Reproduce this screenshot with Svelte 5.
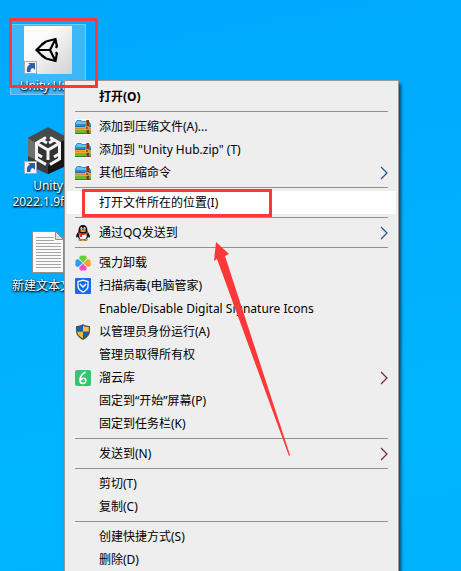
<script>
  const groups = [
    [{ label: "打开(O)", isDefault: true }],
    [
      { label: "添加到压缩文件(A)...", icon: "archive" },
      { label: '添加到 "Unity Hub.zip" (T)', icon: "archive" },
      { label: "其他压缩命令", icon: "archive", submenu: true }
    ],
    [{ label: "打开文件所在的位置(I)", active: true }],
    [{ label: "通过QQ发送到", icon: "penguin", submenu: true }],
    [
      { label: "强力卸载", icon: "clover" },
      { label: "扫描病毒(电脑管家)", icon: "guard" },
      { label: "Enable/Disable Digital Signature Icons" },
      { label: "以管理员身份运行(A)", icon: "shield" },
      { label: "管理员取得所有权" },
      { label: "溜云库", icon: "six", submenu: true, warm: true },
      { label: "固定到“开始”屏幕(P)" },
      { label: "固定到任务栏(K)" }
    ],
    [{ label: "发送到(N)", submenu: true, warm: true }],
    [{ label: "剪切(T)" }, { label: "复制(C)" }],
    [{ label: "创建快捷方式(S)" }, { label: "删除(D)" }]
  ];
</script>

{#snippet shortcutArrow()}
  <rect x="0.5" y="35.5" width="12" height="12" fill="#f6f6f6" stroke="#a9a9a9" />
  <path d="M3 46c-.5-4.500.5-6.500 3-7.500L4 37h7v7l-2-2c-2 .5-2.800 1.800-2.500 4z" fill="#2b5fae" />
{/snippet}

{#snippet menuIcon(name)}
  <svg viewBox="0 0 16 16" width="16" height="16" aria-hidden="true">
    {#if name === "archive"}
      <rect width="16" height="16" fill="#fff" />
      <path d="M0 4l2-3h4l1 1h7l2 3v3H0z" fill="#238ed0" />
      <path d="M2 2h4l1 1h6l1 2H1z" fill="#67c4f2" />
      <path d="M0 7h16v1H0z" fill="#176cae" />
      <path d="M0 8h16v3H0z" fill="#f4a629" />
      <path d="M0 9h16v1H0z" fill="#e98a1c" />
      <path d="M0 11h16v4H0z" fill="#72b928" />
      <path d="M0 14h16v1H0z" fill="#367d1b" />
      <path d="M11 1h3v14h-3z" fill="#713d22" />
      <path d="M11 1h1v14h-1z" fill="#a7653b" />
      <path d="M10.500 7.500h3v3h-3z" fill="#8c5731" stroke="#e5c08c" stroke-width=".7" />
    {:else if name === "penguin"}
      <path d="M3.500 6.500C3.500 2 5 0 8 0s4.500 2 4.500 6.500c2 2.500 3 5 2 6-.5.5-1-.3-1.500-1-.3 1.500-1 2.200-1.500 2.600l1 1c-1 1.100-3.500 1-4.500 0-1 1-3.500 1.100-4.500 0l1-1C4 13.700 3.300 13 3 11.500c-.5.700-1 1.500-1.500 1-1-1 0-3.500 2-6z" fill="#111" />
      <path d="M4.500 9h7c1 5-2 5.500-3.500 5.500S3.500 14 4.500 9z" fill="#fff" />
      <ellipse cx="6.500" cy="3.500" rx="1.100" ry="1.500" fill="#fff" />
      <ellipse cx="9.500" cy="3.500" rx="1.100" ry="1.500" fill="#fff" />
      <circle cx="6.900" cy="3.700" r=".5" fill="#111" />
      <circle cx="9.200" cy="3.700" r=".5" fill="#111" />
      <ellipse cx="8" cy="6" rx="3" ry="1" fill="#f7a51b" />
      <path d="M3.200 7c3 1.600 6.600 1.600 9.600 0l.5 1.600c-2 1.300-4 1.500-6.300 1.300V12H5l.2-2.300-2.500-1z" fill="#e8251f" />
      <path d="M3 14.200c1.500-.5 3 0 4.500.8-1 1.100-4.500 1.100-4.500-.8zM13 14.200c-1.500-.5-3 0-4.500.8 1 1.100 4.500 1.100 4.500-.8z" fill="#f39b1d" />
    {:else if name === "clover"}
      <path d="M8 7.500L4.300 3.500C4 1 6 0 8 1c2-1 4 0 3.700 2.500z" fill="#5ed332" />
      <path d="M8.500 8l4-3.700C15 4 16.500 6 15.300 8c1.200 2-.3 4-2.800 3.700z" fill="#ffa226" />
      <path d="M8 8.500l3.700 4C12 15 10 16.500 8 15.300 6 16.500 4 15 4.300 12.500z" fill="#f04bc4" />
      <path d="M7.500 8l-4 3.700C1 12-.5 10 .7 8-.5 6 1 4 3.500 4.300z" fill="#2d9af3" />
    {:else if name === "guard"}
      <rect width="16" height="16" rx="1" fill="#176bf2" />
      <path d="M8 2.200l5 1.400v4.200c0 3-2 5-5 6.300-3-1.300-5-3.300-5-6.300V3.600z" fill="none" stroke="#fff" stroke-width="1.300" />
      <path d="M5 6l3 3 3-3" fill="none" stroke="#fff" stroke-width="1.500" />
    {:else if name === "shield"}
      <path d="M8 0c2 1.500 4.500 2 7 2v5c0 4-3 7-7 9-4-2-7-5-7-9V2c2.500 0 5-.5 7-2z" fill="#4b4f55" />
      <path d="M8 1.500v6.300H2.200V3C4.500 3 6.500 2.500 8 1.500z" fill="#0a63bd" />
      <path d="M8 1.500v6.300h5.800V3C11.500 3 9.500 2.500 8 1.500z" fill="#fdc132" />
      <path d="M8 7.800v6.800c-3.300-1.800-5.600-4-5.800-6.800z" fill="#fdb62d" />
      <path d="M8 7.800v6.800c3.300-1.800 5.600-4 5.800-6.800z" fill="#0f5fb4" />
    {:else if name === "six"}
      <rect width="16" height="16" rx="2" fill="#32c671" />
      <path d="M10.500 2C7 4 5 7 5 10.300c0 2.200 1.200 3.200 2.800 3.200 1.800 0 3-1.300 3-3 0-1.500-.9-2.300-2.100-2.300-1.500 0-2.500 1-3.200 2.300" fill="none" stroke="#fff" stroke-width="1.600" />
    {/if}
  </svg>
{/snippet}

<main class="desktop">
  <div class="icons">
    <button class="shortcut selected">
      <svg viewBox="0 0 48 48" width="48" height="48" aria-hidden="true">
        <defs>
          <linearGradient id="tile" x1="0" y1="0" x2="1" y2="1">
            <stop offset=".3" stop-color="#fcfcfc" />
            <stop offset="1" stop-color="#d2d2d2" />
          </linearGradient>
        </defs>
        <rect width="48" height="48" fill="url(#tile)" />
        <g fill="none" stroke="#000" stroke-width="2.200">
          <path d="M19 17.500L12.500 24l6.500 6.500M22 15.500l9.500-2.500 1.500 8M22 32.500l9.500 2.500 1.500-8" />
          <path d="M13 24h13M31 14l-5 10 5 10" />
          <path d="M18 18.500l4-3M18 29.500l4 3M33 20l-1 2M33 28l-1-2" />
        </g>
        {@render shortcutArrow()}
      </svg>
      <span>Unity Hub</span>
    </button>
    <button class="shortcut">
      <svg viewBox="0 0 48 48" width="48" height="48" aria-hidden="true">
        <path d="M24 1.500L44 12v27L24 48 4 39V12z" fill="#2e2e2e" />
        <path d="M24 1.500L44 12 24 24 4 12z" fill="#4a4a4a" />
        <path d="M4 12l20 12v24L4 39z" fill="#707070" />
        <path d="M4 30l20 10v8L4 39z" fill="#3c3c3c" />
        <path d="M24 24l20-12v27L24 48z" fill="#151515" />
        <path d="M12 18l12-6 12 6v15l-12 7-12-7z" fill="#333" />
        <g fill="none" stroke="#f4f4f4" stroke-width="3">
          <path d="M22 11.500l-9.500 5.500V33l9.500 5.500" />
          <path d="M26 11.500l9.500 5.500V33L26 38.500" />
          <path d="M13 17.500l11 6.500 11-6.500M24 23v11" />
          <path d="M18 14l5 3M30 14l-5 3M13 28l5 3M35 28l-5 3" />
        </g>
        {@render shortcutArrow()}
      </svg>
      <span>Unity 2022.1.9f1c1</span>
    </button>
    <button class="shortcut">
      <svg viewBox="0 0 48 48" width="48" height="48" aria-hidden="true">
        <path d="M8.500 5.500h23l8 8v33h-31z" fill="#fafafa" stroke="#8f8f8f" />
        <path d="M31.500 5.500v8h8z" fill="#dedede" stroke="#8f8f8f" />
        <path d="M12 11.500h18M12 14.500h18M12 17.500h25M12 20.500h25M12 23.500h25M12 26.500h25M12 29.500h25M12 32.500h25M12 35.500h25M12 38.500h25M12 41.500h25" stroke="#a5a5a5" />
      </svg>
      <span>新建文本文档</span>
    </button>
  </div>

  <div class="menu" role="menu">
    {#each groups as group, i}
      {#if i > 0}
        <hr />
      {/if}
      {#each group as item}
        <button class="item" class:active={item.active} class:default={item.isDefault} role="menuitem">
          <span class="slot">
            {#if item.icon}
              {@render menuIcon(item.icon)}
            {/if}
          </span>
          <span class="label">{item.label}</span>
          {#if item.submenu}
            <svg class="chevron" class:warm={item.warm} viewBox="0 0 8 14" width="8" height="14" aria-hidden="true">
              <path d="M1 1l6 6-6 6" />
            </svg>
          {/if}
        </button>
      {/each}
    {/each}
  </div>

  <div class="mark mark-shortcut"></div>
  <div class="mark mark-item"></div>
  <svg class="pointer" viewBox="0 0 76 214" width="76" height="214" aria-hidden="true">
    <path d="M2 0l13 12-4 2 65 199-1 1L3 17l-3 2z" />
  </svg>
</main>

<style>
  :global(body) {
    margin: 0;
  }
  .desktop {
    position: relative;
    height: 100vh;
    overflow: hidden;
    background: linear-gradient(170deg, #00a8fc 0%, #00adff 35%, #00b5ff 75%, #00b2ff 100%);
    font-family: "Noto Sans", "Noto Sans CJK SC", sans-serif;
    font-size: 12px;
  }
  button {
    margin: 0;
    border: 0;
    background: none;
    font: inherit;
  }
  .icons {
    display: grid;
    grid-template-columns: 76px;
    grid-auto-rows: 100px;
    align-items: start;
    padding: 24px 10px;
  }
  .shortcut {
    display: flex;
    flex-direction: column;
    align-items: center;
    gap: 4px;
    padding: 1px 0 0;
    border: 1px solid transparent;
    color: #fff;
    line-height: 16px;
    text-shadow: 1px 1px 2px #000, 0 1px 2px #000;
  }
  .shortcut.selected {
    background: #3cb7f8;
    border-color: #74cbfa;
  }
  .menu {
    position: absolute;
    top: 80px;
    left: 64px;
    box-sizing: border-box;
    min-width: 335px;
    padding: 4px 2px;
    border: 1px solid #999;
    background: #eee;
    box-shadow: 2px 4px 3px rgba(0, 0, 0, 0.6);
  }
  hr {
    height: 1px;
    margin: 3px 8px;
    border: 0;
    background: #919191;
  }
  .item {
    display: flex;
    align-items: center;
    width: 100%;
    height: 23px;
    padding: 0 8px;
    color: #000;
    line-height: 23px;
    text-align: left;
    white-space: nowrap;
  }
  .item.active {
    background: #fff;
  }
  .item.default {
    font-weight: bold;
  }
  .slot {
    display: flex;
    width: 16px;
    margin-right: 8px;
  }
  .label {
    flex: 1;
  }
  .chevron path {
    fill: none;
    stroke: #23528c;
    stroke-width: 1.2;
  }
  .chevron.warm path {
    stroke: #7a2433;
  }
  .mark {
    position: absolute;
    box-sizing: border-box;
    border: 3px solid #fd3838;
  }
  .mark-shortcut {
    top: 18px;
    left: 9px;
    width: 89px;
    height: 70px;
  }
  .mark-item {
    top: 189px;
    left: 82px;
    width: 190px;
    height: 28px;
  }
  .pointer {
    position: absolute;
    top: 242px;
    left: 214px;
    fill: #fd3838;
  }
</style>
